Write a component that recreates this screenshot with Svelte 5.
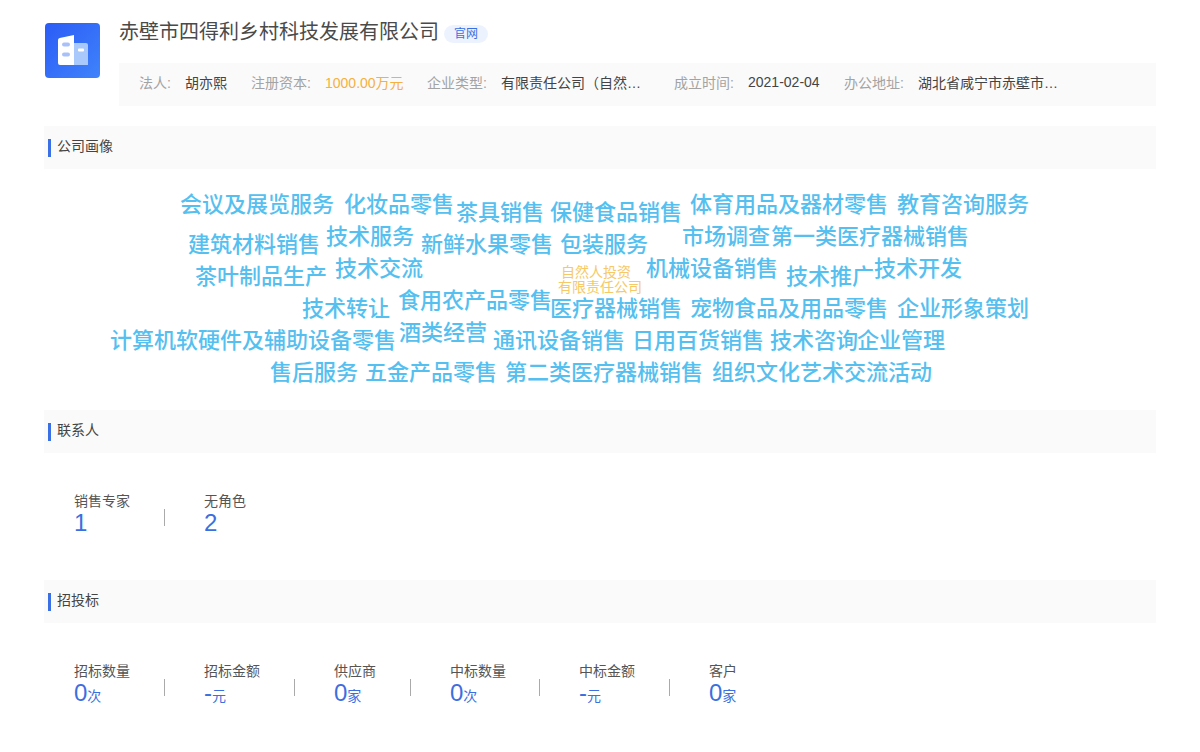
<script>
  const info = [
    { label: '法人:', value: '胡亦熙', w: 42, gap: 24 },
    { label: '注册资本:', value: '1000.00万元', w: 79, gap: 23, money: true },
    { label: '企业类型:', value: '有限责任公司（自然…', w: 141, gap: 32 },
    { label: '成立时间:', value: '2021-02-04', w: 72, gap: 24 },
    { label: '办公地址:', value: '湖北省咸宁市赤壁市…', w: 141, gap: 0 }
  ];

  const words = [
    ['会议及展览服务', 180, 204], ['化妆品零售', 344, 204], ['茶具销售', 456, 212],
    ['保健食品销售', 550, 212], ['体育用品及器材零售', 690, 204], ['教育咨询服务', 897, 204],
    ['建筑材料销售', 188, 244], ['技术服务', 326, 236], ['新鲜水果零售', 421, 244],
    ['包装服务', 560, 244], ['市场调查', 682, 236], ['第一类医疗器械销售', 771, 236],
    ['茶叶制品生产', 195, 276], ['技术交流', 335, 268], ['机械设备销售', 646, 268],
    ['技术推广', 786, 276], ['技术开发', 874, 268], ['技术转让', 302, 308],
    ['食用农产品零售', 398, 300], ['医疗器械销售', 550, 308], ['宠物食品及用品零售', 690, 308],
    ['企业形象策划', 897, 308], ['计算机软硬件及辅助设备零售', 110, 340], ['酒类经营', 399, 332],
    ['通讯设备销售', 493, 340], ['日用百货销售', 632, 340], ['技术咨询', 770, 340],
    ['企业管理', 857, 340], ['售后服务', 270, 372], ['五金产品零售', 365, 372],
    ['第二类医疗器械销售', 505, 372], ['组织文化艺术交流活动', 712, 372]
  ];
  const tags = [['自然人投资', 561, 271], ['有限责任公司', 558, 286]];

  const cloudLeft = 44;
  const cloudTop = 168;

  const contacts = [
    { label: '销售专家', num: '1', w: 130 },
    { label: '无角色', num: '2', w: 130 }
  ];
  const bids = [
    { label: '招标数量', num: '0', unit: '次', w: 130 },
    { label: '招标金额', num: '-', unit: '元', w: 130 },
    { label: '供应商', num: '0', unit: '家', w: 116 },
    { label: '中标数量', num: '0', unit: '次', w: 129 },
    { label: '中标金额', num: '-', unit: '元', w: 130 },
    { label: '客户', num: '0', unit: '家', w: 100 }
  ];
</script>

<div class="page">
  <header class="head">
    <svg class="logo" width="55" height="55" viewBox="0 0 55 55">
      <defs>
        <linearGradient id="lg" x1="0" y1="0" x2="1" y2="1">
          <stop offset="0" stop-color="#2b5cf6" />
          <stop offset="1" stop-color="#3f83fb" />
        </linearGradient>
      </defs>
      <rect width="55" height="55" rx="4" fill="url(#lg)" />
      <path d="M29 20h12a2 2 0 0 1 2 2v20H29z" fill="#a9c8fb" />
      <path d="M13 17a2 2 0 0 1 1.700-2L29 12V42H15a2 2 0 0 1-2-2z" fill="#fff" />
      <rect x="17" y="19.500" width="8" height="4" rx="2" fill="#a9c1fa" />
      <rect x="17" y="29.500" width="8" height="4" rx="2" fill="#a9c1fa" />
      <rect x="33" y="25.500" width="6" height="3" rx="1" fill="#fff" />
    </svg>
    <div class="head-main">
      <div class="title-row">
        <h1>赤壁市四得利乡村科技发展有限公司</h1>
        <span class="site">官网</span>
      </div>
      <div class="info">
        {#each info as item}
          <span class="lab">{item.label}</span>
          <span class="val" class:money={item.money} style="width:{item.w}px;margin-right:{item.gap}px">{item.value}</span>
        {/each}
      </div>
    </div>
  </header>

  <section class="bar first"><i></i>公司画像</section>
  <div class="cloud">
    {#each words as [text, x, y]}
      <span class="word" style="left:{x - cloudLeft}px;top:{y - cloudTop}px">{text}</span>
    {/each}
    {#each tags as [text, x, y]}
      <span class="tag" style="left:{x - cloudLeft}px;top:{y - cloudTop}px">{text}</span>
    {/each}
  </div>

  <section class="bar"><i></i>联系人</section>
  <div class="stats contacts">
    {#each contacts as c}
      <div class="stat" style="width:{c.w}px">
        <div class="s-lab">{c.label}</div>
        <div class="s-num">{c.num}</div>
      </div>
    {/each}
  </div>

  <section class="bar"><i></i>招投标</section>
  <div class="stats">
    {#each bids as b}
      <div class="stat" style="width:{b.w}px">
        <div class="s-lab">{b.label}</div>
        <div class="s-num">{b.num}<small>{b.unit}</small></div>
      </div>
    {/each}
  </div>
</div>

<style>
  :global(body) {
    margin: 0;
    background: #fff;
  }
  .page {
    height: 752px;
    overflow: hidden;
    box-sizing: border-box;
    padding: 18px 44px 0;
    font-family: "Liberation Sans", "Noto Sans CJK SC", sans-serif;
    color: #333;
  }
  .head {
    display: flex;
    align-items: flex-start;
  }
  .logo {
    flex-shrink: 0;
    margin: 5px 19px 0 1px;
  }
  .head-main {
    flex: 1;
    min-width: 0;
  }
  .title-row {
    display: flex;
    align-items: center;
    height: 28px;
  }
  h1 {
    margin: 0;
    font-size: 20px;
    font-weight: 400;
    color: #4a4a4a;
    line-height: 28px;
  }
  .site {
    margin-left: 5px;
    margin-top: 3px;
    width: 44px;
    height: 18px;
    line-height: 18px;
    border-radius: 9px;
    background: #edf3fe;
    color: #3a6fe0;
    font-size: 12px;
    text-align: center;
  }
  .info {
    display: flex;
    align-items: center;
    height: 43px;
    box-sizing: border-box;
    margin-top: 17px;
    padding: 0 0 6px 20px;
    background: #fafafa;
    font-size: 14px;
  }
  .lab {
    width: 46px;
    flex-shrink: 0;
    color: #a3a3a3;
    white-space: nowrap;
  }
  .lab:nth-child(n + 3) {
    width: 74px;
  }
  .val {
    color: #444;
    white-space: nowrap;
    flex-shrink: 0;
  }
  .money {
    color: #f5b040;
  }
  .bar {
    position: relative;
    height: 43px;
    box-sizing: border-box;
    padding: 10px 0 0 13px;
    background: #fafafa;
    font-size: 14px;
    line-height: 20px;
    color: #444;
  }
  .bar i {
    position: absolute;
    left: 4px;
    top: 13px;
    width: 3px;
    height: 18px;
    background: #3b6fe6;
  }
  .first {
    margin-top: 20px;
  }
  .cloud {
    position: relative;
    height: 241px;
  }
  .word,
  .tag {
    position: absolute;
    white-space: nowrap;
    transform: translateY(-50%);
    line-height: 1.2;
  }
  .word {
    font-size: 22px;
    font-weight: 500;
    color: #55c0f0;
  }
  .tag {
    font-size: 14px;
    color: #f6c966;
  }
  .stats {
    display: flex;
    padding: 38px 0 0 30px;
  }
  .contacts {
    height: 127px;
    box-sizing: border-box;
  }
  .stat {
    position: relative;
    flex-shrink: 0;
  }
  .stat:not(:last-child)::after {
    content: "";
    position: absolute;
    right: 39px;
    top: 18px;
    width: 1px;
    height: 17px;
    background: #aaa;
  }
  .s-lab {
    font-size: 14px;
    line-height: 20px;
    color: #555;
  }
  .s-num {
    font-size: 24px;
    line-height: 24px;
    color: #3b6fe0;
  }
  .s-num small {
    font-size: 14px;
  }
</style>
